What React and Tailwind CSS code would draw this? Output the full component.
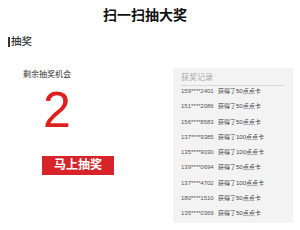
import React from 'react';

const RECORDS = [
  { phone: '159****2401', prize: '获得了50点点卡' },
  { phone: '151****2086', prize: '获得了50点点卡' },
  { phone: '156****8583', prize: '获得了50点点卡' },
  { phone: '137****9385', prize: '获得了100点点卡' },
  { phone: '135****9030', prize: '获得了100点点卡' },
  { phone: '139****0694', prize: '获得了50点点卡' },
  { phone: '137****4702', prize: '获得了100点点卡' },
  { phone: '180****1510', prize: '获得了50点点卡' },
  { phone: '135****0369', prize: '获得了50点点卡' },
];

export default function App() {
  return (
    <div className="w-[300px] h-[230px] bg-white overflow-hidden font-['Liberation_Sans','Noto_Sans_CJK_SC',sans-serif] text-[#222]">
      <h1 className="pt-[7px] pr-[10px] text-center text-[14px] leading-[16px] font-bold text-[#111]">
        扫一扫抽大奖
      </h1>

      <div className="mt-[13px] pl-[8px] flex items-center">
        <span className="w-[2px] h-[10px] bg-[#333]" />
        <span className="ml-[1px] text-[10.5px] leading-[11px] font-medium text-[#333]">抽奖</span>
      </div>

      <div className="mt-[21px] flex">
        <div className="w-[173px] pt-[2px]">
          <p className="pl-[23px] text-[8px] leading-[9px] text-[#333]">剩余抽奖机会</p>
          <p className="mt-[6px] pl-[43px] text-[50px] leading-[50px] text-[#e0201f]">2</p>
          <button className="mt-[21px] ml-[42px] w-[72px] h-[19px] bg-[#d7242a] text-white text-[12px] leading-[19px] font-bold">
            马上抽奖
          </button>
        </div>

        <div className="w-[120px] h-[155px] bg-[#f3f3f3] px-[8px]">
          <div className="pt-[6px] pb-[3px] border-b border-[#d8d8d8] text-[8px] leading-[8px] text-[#aaa]">
            获奖记录
          </div>
          <ul>
            {RECORDS.map((r, i) => (
              <li key={i} className="h-[15.25px] pt-[2px] flex text-[6px] leading-[6px] text-[#444]">
                <span className="w-[37px] text-[#555]">{r.phone}</span>
                <span>{r.prize}</span>
              </li>
            ))}
          </ul>
        </div>
      </div>
    </div>
  );
}
